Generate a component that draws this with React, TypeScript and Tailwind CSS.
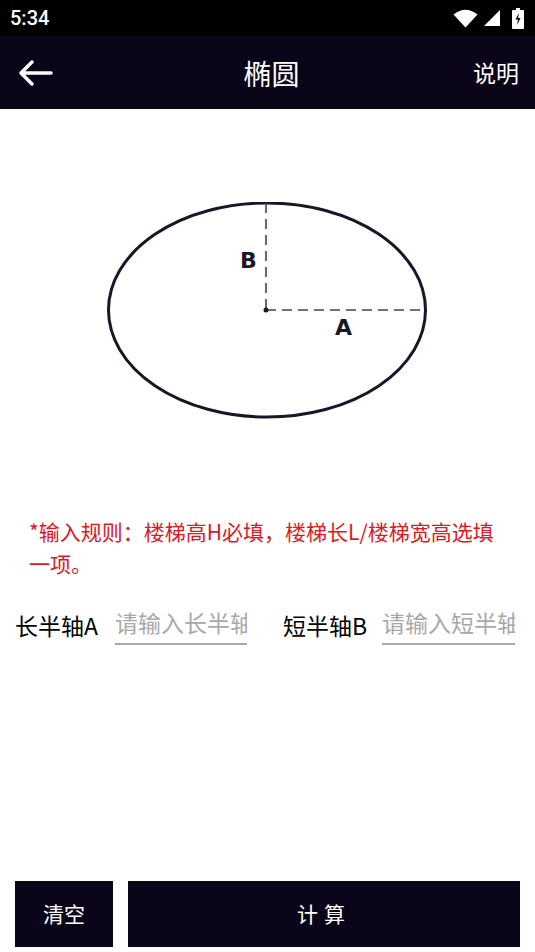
import React from "react";

const font = { fontFamily: '"Noto Sans CJK SC", "Noto Sans", Roboto, sans-serif' };

export default function App() {
  return (
    <div className="w-[535px] h-[952px] bg-white flex flex-col relative overflow-hidden" style={font}>
      {/* status bar */}
      <div className="h-[36px] bg-black flex items-center justify-between pl-[10px] pr-[11px] shrink-0">
        <span className="text-white text-[20px] font-medium" style={{ fontFamily: 'Roboto, sans-serif' }}>5:34</span>
        <div className="flex items-center gap-[5px]">
          <svg width="25" height="19" viewBox="0 0 25 19">
            <path d="M0.5 5.5 Q12.5 -4 24.5 5.5 L12.5 18.5 Z" fill="white" />
          </svg>
          <svg width="18" height="18" viewBox="0 0 18 18" className="mr-[6px]">
            <path d="M17 1 L17 17 L1 17 Z" fill="white" />
          </svg>
          <svg width="12" height="21" viewBox="0 0 12 21">
            <rect x="4" y="0" width="4" height="2" fill="white" />
            <rect x="0" y="2" width="12" height="19" rx="1" fill="white" />
            <path d="M7 5 L3.5 11.5 L6 11.5 L5 17 L8.5 10 L6 10 Z" fill="black" />
          </svg>
        </div>
      </div>
      {/* header */}
      <div className="h-[73px] bg-[#0b0519] flex items-center justify-between px-[16px] shrink-0 relative">
        <svg width="36" height="28" viewBox="0 0 36 28" className="ml-[1px]">
          <path d="M34 14 H4 M15 3 L4 14 L15 25" stroke="white" strokeWidth="3.5" fill="none" strokeLinecap="round" strokeLinejoin="round" />
        </svg>
        <span className="absolute left-1/2 -translate-x-1/2 text-white text-[28px] leading-none ml-[4px]">椭圆</span>
        <span className="text-white text-[23px] leading-none">说明</span>
      </div>
      {/* diagram */}
      <div className="h-[400px] flex items-start justify-center pt-[93px] shrink-0">
        <svg width="535" height="230" viewBox="0 0 535 230">
          <ellipse cx="267" cy="108" rx="158.5" ry="107" fill="none" stroke="#1a1628" strokeWidth="3" />
          <line x1="266" y1="1" x2="266" y2="108" stroke="#444" strokeWidth="1.6" strokeDasharray="10 6" />
          <line x1="266" y1="108" x2="425" y2="108" stroke="#444" strokeWidth="1.6" strokeDasharray="10 6" />
          <circle cx="266" cy="108" r="2.5" fill="#1a1628" />
          <text x="240" y="66" fontSize="22" fontWeight="700" fill="#1a1628" fontFamily="'DejaVu Sans', sans-serif">B</text>
          <text x="335" y="133" fontSize="22" fontWeight="700" fill="#1a1628" fontFamily="'DejaVu Sans', sans-serif">A</text>
        </svg>
      </div>
      {/* rule */}
      <div className="px-[29px] text-[#e0171c] text-[21px] leading-[32px] mt-[6px] shrink-0">
        *输入规则：楼梯高H必填，楼梯长L/楼梯宽高选填一项。
      </div>
      {/* inputs */}
      <div className="flex items-center mt-[26px] px-[15px] shrink-0">
        <span className="text-black text-[23px] w-[100px] shrink-0">长半轴A</span>
        <div className="w-[132px] border-b-2 border-[#a8a8a8] pb-[3px] overflow-hidden whitespace-nowrap">
          <span className="text-[#a8a8a8] text-[23px]">请输入长半轴</span>
        </div>
        <span className="text-black text-[23px] w-[99px] shrink-0 ml-[36px]">短半轴B</span>
        <div className="w-[133px] border-b-2 border-[#a8a8a8] pb-[3px] overflow-hidden whitespace-nowrap">
          <span className="text-[#a8a8a8] text-[23px]">请输入短半轴</span>
        </div>
      </div>
      <div className="flex-1" />
      {/* buttons */}
      <div className="flex px-[15px] gap-[15px] pb-[5px] shrink-0">
        <button className="w-[98px] h-[66px] bg-[#0b0519] text-white text-[21px]">清空</button>
        <button className="w-[392px] h-[66px] bg-[#0b0519] text-white text-[21px] tracking-[6px]">计算</button>
      </div>
    </div>
  );
}
